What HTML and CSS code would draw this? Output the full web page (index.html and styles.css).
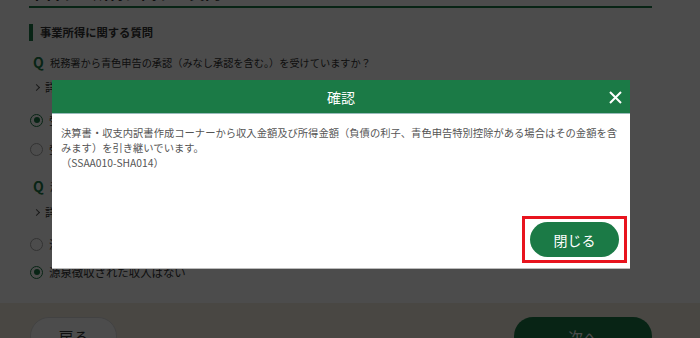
FILE: index.html
```html
<!DOCTYPE html>
<html lang="ja">
<head>
    <meta charset="UTF-8">
    <meta name="viewport" content="width=device-width, initial-scale=1.0">
    <title>確認</title>
    <link rel="stylesheet" href="styles.css">
</head>
<body>

    <!-- Page behind the dialog -->
    <div class="page">
        <h2 class="page-title">申告する所得に関する質問</h2>

        <div class="sec-title">事業所得に関する質問</div>

        <div class="q">
            <span class="q-mark">Q</span>
            <span>税務署から青色申告の承認（みなし承認を含む。）を受けていますか？</span>
        </div>
        <div class="more more-1"><span class="chev"></span>詳しくはこちら</div>
        <label class="radio r1"><span class="dot on"></span>受けている</label>
        <label class="radio r2"><span class="dot"></span>受けていない</label>

        <div class="q q2">
            <span class="q-mark">Q</span>
            <span>源泉徴収された収入はありますか？</span>
        </div>
        <div class="more more-2"><span class="chev"></span>詳しくはこちら</div>
        <label class="radio r3"><span class="dot"></span>源泉徴収された収入がある</label>
        <label class="radio r4"><span class="dot on"></span>源泉徴収された収入はない</label>
    </div>

    <div class="page-footer">
        <button class="btn-back">戻る</button>
        <button class="btn-next">次へ</button>
    </div>

    <!-- Dialog -->
    <div class="overlay">
        <div class="modal">
            <div class="modal-head">
                <span class="modal-title">確認</span>
                <span class="modal-close">
                    <svg width="13" height="13" viewBox="0 0 13 13">
                        <path d="M1 1 L12 12 M12 1 L1 12" stroke="#fff" stroke-width="2" fill="none"/>
                    </svg>
                </span>
            </div>
            <div class="modal-body">
                <p class="modal-text">決算書・収支内訳書作成コーナーから収入金額及び所得金額（負債の利子、青色申告特別控除がある場合はその金額を含みます）を引き継いでいます。<br>（SSAA010-SHA014）</p>
                <div class="modal-actions">
                    <span class="mark">
                        <button class="btn-close">閉じる</button>
                    </span>
                </div>
            </div>
        </div>
    </div>

</body>
</html>
```

FILE: styles.css
```css
/* Base */
body {
    margin: 0;
    width: 700px;
    height: 338px;
    overflow: hidden;
    background-color: #fff;
    font-family: 'Noto Sans CJK JP', 'Noto Sans', sans-serif;
    color: #333;
}

/* Page behind the dialog */
.page {
    padding: 0 48px 0 29px;
    margin-top: -18px;
}

.page-title {
    margin: 0;
    font-size: 16px;
    line-height: 20px;
    padding-bottom: 4px;
    border-bottom: 2px solid #1b7a46;
}

.sec-title {
    margin-top: 16px;
    border-left: 4px solid #1b7a46;
    padding-left: 7px;
    font-size: 11.3px;
    line-height: 17px;
    font-weight: bold;
}

.q {
    display: flex;
    align-items: center;
    height: 20px;
    margin-top: 11px;
    padding-left: 4px;
    font-size: 10.2px;
}

.q2 {
    margin-top: 19px;
}

.q-mark {
    width: 17px;
    font-size: 14px;
    font-weight: bold;
    color: #1b7a46;
}

.more {
    display: flex;
    align-items: center;
    height: 16px;
    padding-left: 5px;
    font-size: 11px;
}

.more-1 { margin-top: 7px; }
.more-2 { margin-top: 8px; }

.chev {
    width: 4px;
    height: 4px;
    border-top: 1px solid #555;
    border-right: 1px solid #555;
    transform: rotate(45deg);
    margin-right: 6px;
}

.radio {
    display: flex;
    align-items: center;
    height: 16px;
    margin-left: 1px;
    font-size: 11.4px;
}

.r1 { margin-top: 17px; }
.r2 { margin-top: 13px; }
.r3 { margin-top: 16px; }
.r4 { margin-top: 12px; }

.dot {
    width: 11px;
    height: 11px;
    border: 1px solid #aaa;
    border-radius: 50%;
    margin-right: 6px;
    display: flex;
    justify-content: center;
    align-items: center;
}

.dot.on {
    border: 1.5px solid #1b7a46;
}

.dot.on::after {
    content: "";
    width: 6px;
    height: 6px;
    border-radius: 50%;
    background-color: #1b7a46;
}

/* Footer */
.page-footer {
    margin-top: 23px;
    height: 60px;
    background-color: #f3ede1;
    display: flex;
    justify-content: space-between;
    align-items: flex-start;
    padding: 14px 48px 0 30px;
}

.btn-back {
    width: 87px;
    height: 38px;
    border: 1px solid #ddd;
    border-radius: 19px;
    background-color: #fff;
    font-family: inherit;
    font-size: 15px;
    color: #333;
}

.btn-next {
    width: 138px;
    height: 38px;
    border: none;
    border-radius: 19px;
    background-color: #1b7a46;
    font-family: inherit;
    font-size: 15px;
    color: #fff;
}

/* Dialog */
.overlay {
    position: fixed;
    top: 0;
    left: 0;
    width: 100%;
    height: 100%;
    background-color: rgba(0, 0, 0, 0.7);
}

.modal {
    position: absolute;
    left: 52px;
    top: 80px;
    width: 578px;
    height: 189px;
    background-color: #fff;
    border-bottom: 1px solid #bbb;
    box-sizing: border-box;
    display: flex;
    flex-direction: column;
}

.modal-head {
    height: 33px;
    background-color: #1b7a46;
    border-bottom: 1px solid #9bb;
    display: flex;
    justify-content: center;
    align-items: center;
    position: relative;
}

.modal-title {
    color: #fff;
    font-size: 14px;
}

.modal-close {
    position: absolute;
    right: 8px;
    top: 11px;
    line-height: 0;
}

.modal-body {
    flex: 1;
    display: flex;
    flex-direction: column;
    padding: 11px 9px 5px 9px;
}

.modal-text {
    margin: 0;
    font-size: 10.3px;
    line-height: 15px;
    color: #555;
}

.modal-actions {
    margin-top: auto;
    display: flex;
    justify-content: flex-end;
    margin-right: -6px;
}

.mark {
    border: 3px solid #e8141e;
    padding: 3px 5px 3px 5px;
    line-height: 0;
}

.btn-close {
    width: 89px;
    height: 35px;
    border: none;
    border-radius: 18px;
    background-color: #1b7a46;
    color: #fff;
    font-family: inherit;
    font-size: 14px;
}
```
